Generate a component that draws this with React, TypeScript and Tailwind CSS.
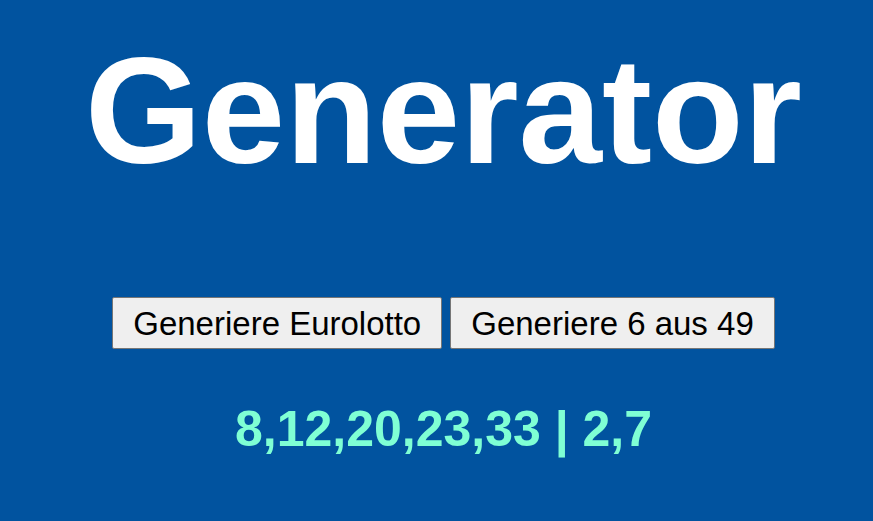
export default function App() {
  return (
    <div
      className="w-[873px] h-[521px] bg-[#01539f] overflow-hidden pl-[14px] flex flex-col items-center"
      style={{ fontFamily: '"Liberation Sans", Arial, sans-serif' }}
    >
      <h1 className="mt-[36px] text-[150px] leading-none font-bold text-white">Generator</h1>
      <div className="mt-[111px] flex gap-[8px]">
        <button className="h-[52px] px-[20px] text-[33px] leading-none text-black bg-[#efefef] border border-[#767676] rounded-[2px]">
          Generiere Eurolotto
        </button>
        <button className="h-[52px] px-[20px] text-[33px] leading-none text-black bg-[#efefef] border border-[#767676] rounded-[2px]">
          Generiere 6 aus 49
        </button>
      </div>
      <div className="mt-[55px] text-[50px] leading-none font-bold text-[#7fffd4]">8,12,20,23,33 | 2,7</div>
    </div>
  );
}
